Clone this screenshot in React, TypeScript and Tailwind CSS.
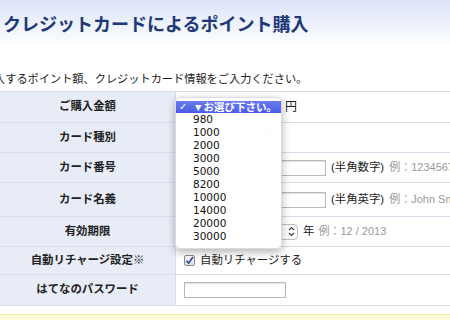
import React from 'react';

const amounts = ['980', '1000', '2000', '3000', '5000', '8200', '10000', '14000', '20000', '30000'];

const jp = "font-['Liberation_Sans','Noto_Sans_CJK_JP',sans-serif]";

function Label({ children }: { children: React.ReactNode }) {
  return (
    <div className="w-[176px] shrink-0 bg-[#e8ecf6] border-r border-[#d6deec] flex items-center justify-center text-[11.4px] font-bold text-[#222]">
      {children}
    </div>
  );
}

function Input({ w }: { w: string }) {
  return <div className={`h-[16px] bg-white border border-[#b9b9b9] shadow-[inset_0_1px_1px_rgba(0,0,0,0.12)] ${w}`} />;
}

// text of these selects lies under the open menu, so only the box is drawn
function FakeSelect({ w }: { w: string }) {
  return (
    <div className={`h-[16px] rounded-[4px] border border-[#bdbdbd] bg-white flex items-center justify-end pr-[2px] ${w}`}>
      <svg width="7" height="11" viewBox="0 0 7 11">
        <path d="M1 4 L3.5 1.5 L6 4 M1 7 L3.5 9.5 L6 7" fill="none" stroke="#444" strokeWidth="1.2" />
      </svg>
    </div>
  );
}

export default function App() {
  return (
    <div className={`relative w-[450px] h-[320px] overflow-hidden bg-white ${jp}`}>
      {/* header */}
      <div className="h-[48px] bg-gradient-to-b from-[#dce4f8] to-white flex items-center pl-[3px] pt-[2px]">
        <h1 className="text-[18px] font-bold text-[#1f3876] leading-none">クレジットカードによるポイント購入</h1>
      </div>
      <div className="h-[43px] flex items-center pt-[19px]">
        <p className="-ml-[6px] text-[11.2px] text-[#222] whitespace-nowrap">入するポイント額、クレジットカード情報をご入力ください。</p>
      </div>

      {/* form table */}
      <div className="border-t border-[#d6deec]">
        <div className="flex h-[31px] border-b border-[#d6deec]">
          <Label>ご購入金額</Label>
          <div className="flex-1 flex items-center pl-[8px] gap-[5px] text-[12px] text-[#222]">
            <FakeSelect w="w-[96px]" />
            <span>円</span>
          </div>
        </div>
        <div className="flex h-[30px] border-b border-[#d6deec]">
          <Label>カード種別</Label>
          <div className="flex-1 flex items-center pl-[8px]">
            <FakeSelect w="w-[94px]" />
          </div>
        </div>
        <div className="flex h-[30px] border-b border-[#d6deec]">
          <Label>カード番号</Label>
          <div className="flex-1 flex items-center pl-[8px] gap-[5px] whitespace-nowrap">
            <Input w="w-[142px]" />
            <span className="text-[11.4px] text-[#222]">(半角数字)</span>
            <span className="text-[11px] text-[#999]">例：1234567890123456</span>
          </div>
        </div>
        <div className="flex h-[34px] border-b border-[#d6deec]">
          <Label>カード名義</Label>
          <div className="flex-1 flex items-center pl-[8px] gap-[5px] whitespace-nowrap">
            <Input w="w-[142px]" />
            <span className="text-[11.4px] text-[#222]">(半角英字)</span>
            <span className="text-[11px] text-[#999]">例：John Smith</span>
          </div>
        </div>
        <div className="flex h-[30px] border-b border-[#d6deec]">
          <Label>有効期限</Label>
          <div className="flex-1 flex items-center pl-[8px] gap-[4px] whitespace-nowrap text-[11.4px] text-[#222]">
            <FakeSelect w="w-[36px]" />
            <div className="w-[16px]" />
            <FakeSelect w="w-[54px]" />
            <span className="ml-[1px]">年</span>
            <span className="text-[11px] text-[#999]">例：12 / 2013</span>
          </div>
        </div>
        <div className="flex h-[28px] border-b border-[#d6deec]">
          <Label>自動リチャージ設定※</Label>
          <div className="flex-1 flex items-center pl-[8px] gap-[5px] text-[11.4px] text-[#222]">
            <div className="w-[11px] h-[11px] rounded-[2px] border border-[#8a8a8a] bg-gradient-to-b from-white to-[#dfe3ea] flex items-center justify-center">
              <svg width="9" height="9" viewBox="0 0 10 10">
                <path d="M1.5 5.2 L4 8 L8.8 1.2" fill="none" stroke="#2a4a9a" strokeWidth="1.8" />
              </svg>
            </div>
            <span>自動リチャージする</span>
          </div>
        </div>
        <div className="flex h-[31px] border-b border-[#d6deec]">
          <Label>はてなのパスワード</Label>
          <div className="flex-1 flex items-center pl-[8px]">
            <Input w="w-[102px]" />
          </div>
        </div>
      </div>
      <div className="mt-[8px] h-[20px] bg-[#fffbd6] border-t border-[#f1e9b6]" />

      {/* open dropdown menu */}
      <div className="absolute left-[175px] top-[97px] w-[107px] rounded-[5px] bg-white/[0.97] shadow-[0_3px_9px_rgba(0,0,0,0.3)] border border-[#dcdcdc] pt-[3px] pb-[5px] font-['DejaVu_Sans','Noto_Sans_CJK_JP',sans-serif]">
        <div className="h-[12px] bg-gradient-to-b from-[#6c7bf0] to-[#4a5ce6] text-white flex items-center text-[10px] leading-none">
          <span className="w-[17px] pl-[3px] text-[10px]">✓</span>
          <span className={`${jp} font-bold text-[10.5px]`}>▼お選び下さい。</span>
        </div>
        {amounts.map(a => (
          <div key={a} className="h-[13px] flex items-center pl-[17px] text-[10.5px] text-[#111] leading-none">
            {a}
          </div>
        ))}
      </div>
    </div>
  );
}
